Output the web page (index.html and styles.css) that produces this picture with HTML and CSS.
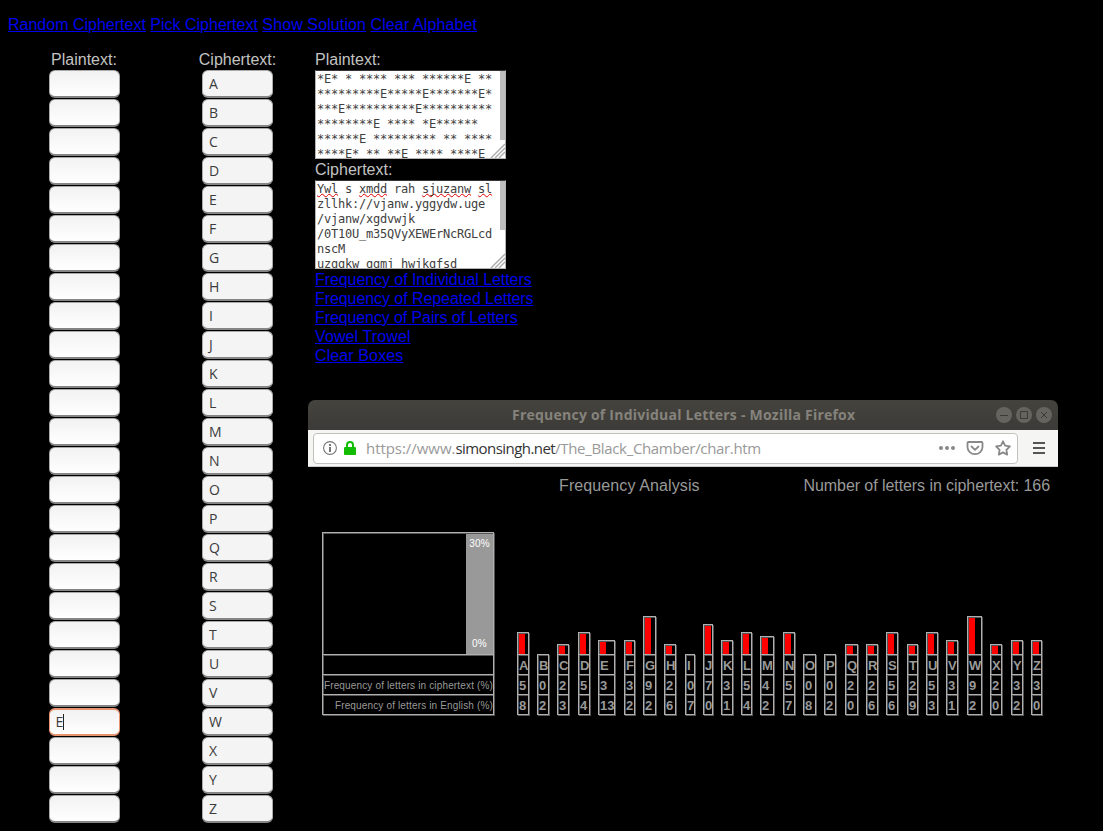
FILE: index.html
```html
<!DOCTYPE html>
<html lang="en">
<head>
<meta charset="utf-8">
<title>Frequency Analysis</title>
<link rel="stylesheet" href="styles.css">
</head>
<body>
<nav class="actions"><a href="#">Random Ciphertext</a> <a href="#">Pick Ciphertext</a> <a class="wide" href="#">Show Solution</a> <a class="wide" href="#">Clear Alphabet</a></nav>
<main class="layout">
  <section class="letters plain"><div class="label">Plaintext:</div><div class="stack" id="plain"></div></section>
  <section class="letters cipher"><div class="label">Ciphertext:</div><div class="stack" id="cipher"></div></section>
  <section class="work">
    <div class="label">Plaintext:</div>
    <div class="area"><pre>*E* * **** *** ******E **
*********E*****E*******E*
***E**********E**********
********E **** *E******
******E ********* ** ****
****E* ** **E **** ****E</pre><i class="thumb tall"></i><svg class="grip" width="15" height="15" viewBox="0 0 15 15"><path d="M1 15L15 1M5 15L15 5M9 15L15 9"/></svg></div>
    <div class="label">Ciphertext:</div>
    <div class="area"><pre><u>Ywl</u> s <u>xmdd</u> rah <u>sjuzanw</u> <u>sl</u>
zllhk://vjanw.yggydw.uge
/vjanw/xgdvwjk
/0T10U_m35QVyXEWErNcRGLcd
nscM
uzggkw ggmj hwjkgfsd</pre><i class="thumb short"></i><svg class="grip" width="15" height="15" viewBox="0 0 15 15"><path d="M1 15L15 1M5 15L15 5M9 15L15 9"/></svg></div>
    <nav class="tools">
      <a class="snug" href="#">Frequency of Individual Letters</a>
      <a class="snug" href="#">Frequency of Repeated Letters</a>
      <a class="tight" href="#">Frequency of Pairs of Letters</a>
      <a class="wide" href="#">Vowel Trowel</a>
      <a class="wide" href="#">Clear Boxes</a>
    </nav>
    <div class="window">
      <header class="titlebar"><span class="title">Frequency of Individual Letters - Mozilla Firefox</span>
        <svg class="controls" width="56" height="16" viewBox="0 0 56 16"><g fill="#66645e"><circle cx="8" cy="8" r="8"/><circle cx="28" cy="8" r="8"/><circle cx="48" cy="8" r="8"/></g><path d="M4 8.5h8M24.5 4.5h7v7h-7zM45 5l6 6M51 5l-6 6" fill="none" stroke="#3b3a36"/></svg>
      </header>
      <div class="toolbar">
        <div class="address">
          <svg width="14" height="14" viewBox="0 0 14 14"><circle cx="7" cy="7" r="6.4" fill="none" stroke="#777" stroke-width="1.1"/><path d="M6 3h2v2H6zM6 6h2v5H6z" fill="#777"/></svg>
          <svg class="lock" width="12" height="14" viewBox="0 0 12 14"><path d="M3 7V4a3 3 0 0 1 6 0v3" fill="none" stroke="#12bc00" stroke-width="2"/><rect y="6" width="12" height="8" rx="1" fill="#12bc00"/></svg>
          <span class="url"><span class="scheme">https://www.</span><b>simonsingh.net</b><span class="path">/The_Black_Chamber/char.htm</span></span>
          <svg class="marks" width="72" height="16" viewBox="0 0 72 16"><g fill="#888"><circle cx="2" cy="8" r="2"/><circle cx="8" cy="8" r="2"/><circle cx="14" cy="8" r="2"/></g><g fill="none" stroke="#888" stroke-width="1.8" stroke-linejoin="round" stroke-linecap="round"><path d="M29.5 2h13q1 0 1 1v4a7.5 7.2 0 0 1-15 0V3q0-1 1-1zM32.5 6.5l3.5 3.3 3.5-3.3"/><path d="M64 1.3l2.1 4.4 4.8.7-3.5 3.4.8 4.8-4.2-2.2-4.2 2.2.8-4.8-3.5-3.4 4.8-.7z"/></g></svg>
        </div>
        <svg class="menu" width="12" height="12" viewBox="0 0 12 12"><path d="M0 1h12M0 6h12M0 11h12" stroke="#555" stroke-width="2"/></svg>
      </div>
      <div class="report">
        <div class="heads"><span class="wide">Frequency Analysis</span><span class="snug">Number of letters in ciphertext: 166</span></div>
        <div class="chart">
          <div class="legend frame">
            <div class="cell scale"><div class="axis"><span>30%</span><span>0%</span></div></div>
            <div class="cell"></div>
            <div class="cell">Frequency of letters in ciphertext (%)</div>
            <div class="cell">Frequency of letters in English (%)</div>
          </div>
          <div class="bars" id="bars"></div>
        </div>
      </div>
    </div>
  </section>
</main>
<script src="app.js"></script>
</body>
</html>
```
FILE: styles.css
```css
* { box-sizing: border-box; }
body { margin: 0; height: 831px; overflow: hidden; background: #000; color: #c3c3c3; font: 16px/20px "Liberation Sans", Arial, sans-serif; }
a { color: #0000ee; text-decoration: underline; }
.wide { letter-spacing: 0.11px; }
.snug { letter-spacing: -0.07px; }
.tight { letter-spacing: -0.1px; }
.actions { padding: 15px 8px 0; height: 50px; }
.layout { display: flex; }
.label { height: 20px; white-space: nowrap; }
.letters { display: flex; flex-direction: column; align-items: center; flex: none; }
.plain { width: 78px; margin-left: 46px; padding-right: 2px; }
.cipher { width: 78px; margin-left: 75px; padding-right: 1px; }
.stack { display: flex; flex-direction: column; gap: 1px; }
.box { width: 71px; height: 28px; border: 1px solid #aaa; border-bottom: 2px solid #858585; border-radius: 6px; background: linear-gradient(#f2f2f2, #fff); color: #3c3c3c; font: 14px/26px "Open Sans", sans-serif; padding-left: 6px; }
.cipher .box { background: #f4f4f4; }
.box.active { border: 2px solid #e8936f; border-width: 2px 1px; line-height: 24px; }
.caret { display: inline-block; width: 1px; height: 16px; background: #222; vertical-align: -3px; }
.work { margin-left: 38px; width: 760px; }
.area { position: relative; width: 191px; height: 89px; margin-bottom: 1px; overflow: hidden; background: #fff; border: 1px solid #b4b4b4; border-top-color: #39343a; }
.area pre { height: 87px; overflow: hidden; margin: 0; padding: 1px 0 0 1px; color: #404040; font: 12px/15px "DejaVu Sans Mono", monospace; letter-spacing: -0.224px; }
.area u { text-decoration: underline wavy #e00000 1px; text-underline-offset: 0; text-decoration-skip-ink: none; }
.thumb { position: absolute; right: -1px; top: 0; width: 6px; background: #bfbfbf; }
.tall { height: 69px; }
.short { height: 49px; }
.grip { position: absolute; right: 0; bottom: 0; fill: none; stroke: #aaa; stroke-width: 1.4; }
.tools { display: flex; flex-direction: column; align-items: flex-start; line-height: 19px; height: 130px; }
.window { width: 750px; margin-left: -7px; }
.titlebar { display: flex; align-items: center; height: 30px; padding: 0 6px 0 204px; border-radius: 7px 7px 0 0; background: linear-gradient(#45433e, #3c3b37); color: #85837c; font: bold 14px/30px "Open Sans", sans-serif; }
.title { white-space: nowrap; letter-spacing: 0.23px; }
.controls { margin-left: auto; }
.toolbar { display: flex; align-items: center; height: 37px; padding-left: 5px; background: #f5f5f4; border-bottom: 1px solid #ccc; }
.address { display: flex; align-items: center; width: 705px; height: 31px; padding: 0 6px 0 9px; border: 1px solid #c3c1be; border-radius: 4px; background: #fff; }
.lock { margin-left: 7px; }
.url { display: flex; margin-left: 10px; color: #999; font: 15px/28px "Open Sans", sans-serif; white-space: nowrap; }
.url b { color: #333; font-weight: 400; letter-spacing: -0.55px; }
.scheme { letter-spacing: -0.05px; }
.path { letter-spacing: -0.33px; }
.marks { margin-left: auto; }
.menu { margin-left: 15px; }
.report { padding: 9px 8px 0 14px; color: #999; }
.heads { display: flex; justify-content: space-between; padding-left: 237px; height: 56px; }
.chart { display: flex; align-items: flex-end; height: 183px; }
.frame { border: 1px solid #b0b0b0; border-top: 0; box-shadow: 1px 1px 0 #555; }
.cell { height: 20px; border-top: 1px solid #b0b0b0; box-shadow: inset 1px 1px 0 #555; white-space: nowrap; overflow: hidden; }
.legend { width: 172px; font-size: 10px; line-height: 21px; text-align: right; letter-spacing: 0.15px; }
.scale { display: flex; justify-content: flex-end; height: 122px; padding-top: 1px; }
.axis { display: flex; flex-direction: column; justify-content: space-between; width: 27px; background: #999; color: #fff; text-align: center; line-height: 20px; }
.bars { display: flex; align-items: flex-end; gap: 8px; margin-left: 23px; }
.column { flex: none; font: bold 13px/21px "Liberation Sans", Arial, sans-serif; }
.column.spaced { margin-right: 1px; }
.column .cell { padding-left: 1px; }
.column .bar { padding-top: 1px; }
.fill { width: 6px; height: 100%; background: #f00; }
```
FILE: app.js
```js
const alphabet = "ABCDEFGHIJKLMNOPQRSTUVWXYZ";
const cipher = [5,0,2,5,3,3,9,2,0,7,3,5,4,5,0,0,2,2,5,2,5,3,9,2,3,3];
const english = [8,2,3,4,13,2,2,6,7,0,1,4,2,7,8,2,0,6,6,9,3,1,2,0,2,0];
const widths = [12,12,12,12,17,11,13,12,10,10,12,11,14,12,13,12,13,12,12,11,12,12,15,12,12,11];
const spaced = "CEHMPSVX";
const html = { plain: "", cipher: "", bars: "" };

[...alphabet].forEach((letter, i) => {
  html.plain += letter === "W"
    ? '<div class="box active">E<i class="caret"></i></div>'
    : '<div class="box"></div>';
  html.cipher += `<div class="box">${letter}</div>`;
  const bar = cipher[i]
    ? `<div class="cell bar" style="height:${cipher[i] * 4 + 2}px"><div class="fill"></div></div>`
    : "";
  html.bars += `<div class="column frame${spaced.includes(letter) ? " spaced" : ""}" style="width:${widths[i]}px">${bar}<div class="cell">${letter}</div><div class="cell">${cipher[i]}</div><div class="cell">${english[i]}</div></div>`;
});

for (const id in html) document.getElementById(id).innerHTML = html[id];
```
